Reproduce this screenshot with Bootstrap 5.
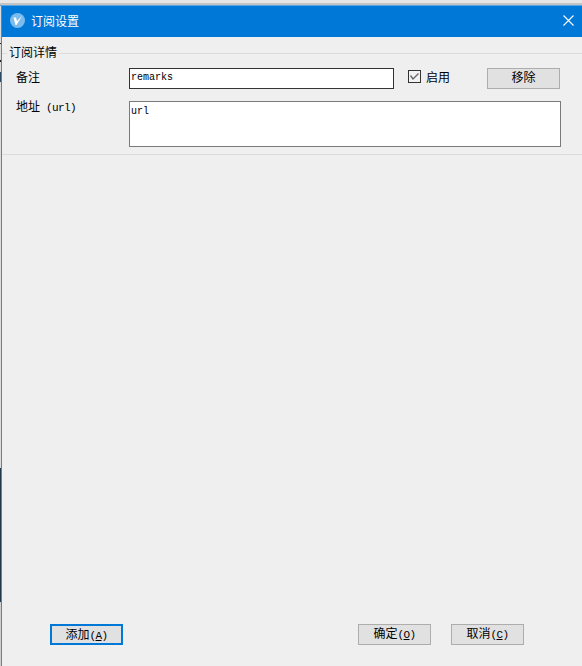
<!DOCTYPE html>
<html lang="zh">
<head>
  <meta charset="UTF-8" />
  <title>订阅设置</title>
  <link href="https://cdn.jsdelivr.net/npm/bootstrap@5.3.3/dist/css/bootstrap.min.css" rel="stylesheet" />
  <style>
    html, body { height: 100%; }
    body {
      margin: 0;
      background: #efefef;
      font-family: "Noto Sans CJK SC", "Liberation Mono", monospace;
      font-size: 12px;
      color: #000;
      overflow: hidden;
    }
    .page-top { height: 6px; background: linear-gradient(#e6e6e6 0 3px, #c4c4c4 3px 5px, #5aa5e0 5px); }
    .page-wrap { height: 660px; }
    .left-strip {
      width: 1px;
      flex: none;
      background: linear-gradient(#dcdcdc 0 37px, #222 37px 38px, #dcdcdc 38px 54px, #222 54px 56px, #dcdcdc 56px 66px, #2a4a66 66px 76px, #dcdcdc 76px 462px, #1f3a4f 462px 596px, #cfcfcf 596px);
    }
    .win {
      flex: 1;
      min-width: 0;
      border-left: 1px solid #3b8dcf;
      background: #efefef;
      display: flex;
      flex-direction: column;
    }
    .win-title {
      height: 31px;
      background: #0078d7;
      color: #fff;
      padding: 0 8px 2px 8px;
      gap: 6px;
    }
    .win-title .ttl { font-size: 12px; }
    .win-body { flex: 1; display: flex; flex-direction: column; }
    .group-box {
      border-top: 1px solid #dcdcdc;
      border-bottom: 1px solid #dcdcdc;
      margin-top: 16px;
      height: 102px;
      padding: 0 20px 0 14px;
      position: relative;
    }
    .group-label {
      position: absolute;
      left: 5px;
      top: -10px;
      background: #efefef;
      padding: 0 2px;
      line-height: 16px;
    }
    .form-row1 { margin-top: 13px; height: 22px; }
    .form-row2 { margin-top: 12px; }
    .lbl { width: 113px; flex: none; line-height: 16px; }
    .form-row1 .lbl, .chk-text { padding-bottom: 2px; }
    .form-row2 .lbl { margin-top: -3px; }
    .lbl-mono { font-family: "Liberation Mono", monospace; font-size: 11px; letter-spacing: -0.6px; }
    .txt-remarks {
      width: 265px;
      height: 21px;
      border: 1px solid #333;
      background: #fff;
      font-family: "Liberation Mono", monospace;
      font-size: 10px;
      padding: 0 1px;
      line-height: 17px;
    }
    .txt-url {
      width: 432px;
      height: 46px;
      border: 1px solid #7a7a7a;
      background: #fff;
      font-family: "Liberation Mono", monospace;
      font-size: 10px;
      padding: 3px 1px;
      line-height: 14px;
    }
    .chk { width: 13px; height: 13px; margin: 0 5px 3px 14px; }
    .win-btn {
      width: 73px;
      height: 21px;
      padding: 0 0 2px;
      border: 1px solid #adadad;
      border-radius: 0;
      background: #e1e1e1;
      color: #000;
      font-size: 12px;
      line-height: 16px;
    }
    .win-btn:hover { background: #e1e1e1; color: #000; border-color: #adadad; }
    .win-btn.is-default { border: 2px solid #0078d7; padding: 0 0 1px; }
    .win-btn .hk { font-family: "Liberation Mono", monospace; font-size: 11px; letter-spacing: -0.6px; }
    .btn-move { margin-left: 37px; }
    .foot { padding: 0 58px 21px 48px; }
    .foot .gap-mid { width: 20px; }
  </style>
</head>
<body>
  <div class="page-top"></div>
  <div class="page-wrap d-flex">
    <div class="left-strip"></div>
    <div class="win">
      <div class="win-title d-flex align-items-center">
        <svg width="15" height="15" viewBox="0 0 15 15">
          <circle cx="7.5" cy="7.5" r="7.5" fill="#7cbcec" />
          <path d="M3.5 4.5 L6 4.5 L7 8 L12 3 L6.5 12 L5.5 12 Z" fill="#fff" />
        </svg>
        <span class="ttl flex-grow-1">订阅设置</span>
        <svg width="11" height="11" viewBox="0 0 11 11">
          <path d="M0.5 0.5 L10.5 10.5 M10.5 0.5 L0.5 10.5" stroke="#fff" stroke-width="1.1" fill="none" />
        </svg>
      </div>
      <div class="win-body">
        <div class="group-box">
          <span class="group-label">订阅详情</span>
          <div class="d-flex align-items-center form-row1">
            <span class="lbl">备注</span>
            <div class="txt-remarks">remarks</div>
            <svg class="chk" viewBox="0 0 13 13">
              <rect x="0.5" y="0.5" width="12" height="12" fill="#f2f2f2" stroke="#333" />
              <path d="M2.5 5.5 L5 9 L10.5 3.5" stroke="#666" stroke-width="1.3" fill="none" />
            </svg>
            <span class="chk-text">启用</span>
            <button type="button" class="btn win-btn btn-move">移除</button>
          </div>
          <div class="d-flex form-row2">
            <span class="lbl">地址<span class="lbl-mono"> (url)</span></span>
            <div class="txt-url">url</div>
          </div>
        </div>
        <div class="flex-grow-1"></div>
        <div class="foot d-flex">
          <button type="button" class="btn win-btn is-default">添加<span class="hk">(<u>A</u>)</span></button>
          <div class="flex-grow-1"></div>
          <button type="button" class="btn win-btn">确定<span class="hk">(<u>O</u>)</span></button>
          <div class="gap-mid"></div>
          <button type="button" class="btn win-btn">取消<span class="hk">(<u>C</u>)</span></button>
        </div>
      </div>
    </div>
  </div>
  <script src="https://cdn.jsdelivr.net/npm/bootstrap@5.3.3/dist/js/bootstrap.bundle.min.js"></script>
</body>
</html>
